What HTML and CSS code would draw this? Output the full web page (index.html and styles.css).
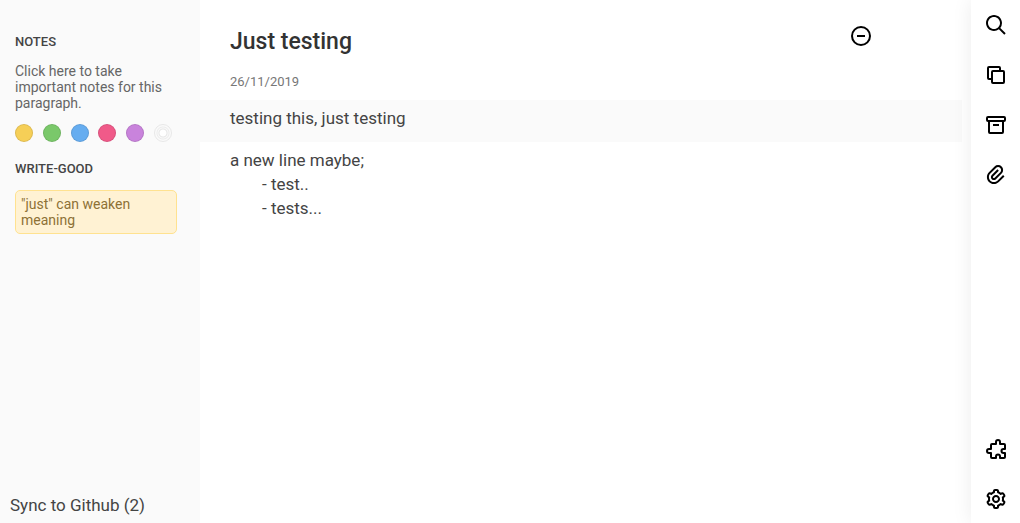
FILE: index.html
```html
<!DOCTYPE html>
<html lang="en">
<head>
<meta charset="utf-8">
<meta name="viewport" content="width=device-width, initial-scale=1">
<title>Just testing</title>
<link rel="stylesheet" href="styles.css">
</head>
<body>
<div class="app">
  <aside class="notes">
    <label class="notes-heading" for="note">NOTES</label>
    <textarea class="note-input" id="note" rows="3">Click here to take important notes for this paragraph.</textarea>
    <div class="swatches">
      <button class="swatch swatch-yellow" aria-label="Yellow"></button>
      <button class="swatch swatch-green" aria-label="Green"></button>
      <button class="swatch swatch-blue" aria-label="Blue"></button>
      <button class="swatch swatch-pink" aria-label="Pink"></button>
      <button class="swatch swatch-purple" aria-label="Purple"></button>
      <button class="swatch swatch-none" aria-label="No colour"></button>
    </div>
    <h2 class="notes-heading">WRITE-GOOD</h2>
    <p class="suggestion">"just" can weaken meaning</p>
    <button class="sync">Sync to Github (2)</button>
  </aside>

  <main class="editor">
    <header class="entry-header">
      <div>
        <h1 class="entry-title">Just testing</h1>
        <time class="entry-date" datetime="2019-11-26">26/11/2019</time>
      </div>
      <button class="icon-button" aria-label="Collapse">
        <svg class="icon" viewBox="0 0 24 24"><g class="line"><circle cx="12" cy="12" r="9"/><path d="M8 12h8"/></g></svg>
      </button>
    </header>
    <p class="paragraph paragraph-active">testing this, just testing</p>
    <div class="paragraph">a new line maybe;
      <div class="indented">- test..</div>
      <div class="indented">- tests...</div>
    </div>
  </main>

  <nav class="toolbar" aria-label="Tools">
    <button class="icon-button" aria-label="Search">
      <svg class="icon" viewBox="0 0 24 24"><path d="M10 18a7.952 7.952 0 0 0 4.897-1.688l5.396 5.396 1.414-1.414-5.396-5.396A7.952 7.952 0 0 0 18 10c0-4.411-3.589-8-8-8s-8 3.589-8 8 3.589 8 8 8zm0-14c3.309 0 6 2.691 6 6s-2.691 6-6 6-6-2.691-6-6 2.691-6 6-6z"/></svg>
    </button>
    <button class="icon-button" aria-label="Documents">
      <svg class="icon" viewBox="0 0 24 24"><g class="line"><path d="M8 16H5a1 1 0 0 1-1-1V5a1 1 0 0 1 1-1h10a1 1 0 0 1 1 1v3"/><rect x="8" y="8" width="12" height="12" rx="1"/></g></svg>
    </button>
    <button class="icon-button" aria-label="Archive">
      <svg class="icon" viewBox="0 0 24 24"><g class="line"><rect x="3" y="4" width="18" height="4" rx="1"/><path d="M5 8v11a1 1 0 0 0 1 1h12a1 1 0 0 0 1-1V8M9 12h6"/></g></svg>
    </button>
    <button class="icon-button" aria-label="Attachments">
      <svg class="icon" viewBox="0 0 24 24"><path transform="rotate(-45 12 12)" d="M17.004 5H9c-1.838 0-3.586.737-4.924 2.076C2.737 8.415 2 10.163 2 12c0 1.838.737 3.586 2.076 4.924C5.414 18.263 7.162 19 9 19h8v-2H9c-1.303 0-2.55-.529-3.51-1.49C4.529 14.55 4 13.303 4 12c0-1.302.529-2.549 1.49-3.51C6.45 7.529 7.697 7 9 7h8.004c.79 0 1.539.314 2.109.886.571.571.886 1.322.887 2.116a2.966 2.966 0 0 1-.884 2.11A2.988 2.988 0 0 1 17 13H9a.988.988 0 0 1-.698-.3A.991.991 0 0 1 8 12c0-.252.11-.507.301-.698A.987.987 0 0 1 9 11h8V9H9c-.79 0-1.541.315-2.114.889C6.314 10.461 6 11.211 6 12s.314 1.54.888 2.114A2.974 2.974 0 0 0 9 15h8.001a4.97 4.97 0 0 0 3.528-1.473 4.967 4.967 0 0 0-.001-7.055A4.95 4.95 0 0 0 17.004 5z"/></svg>
    </button>
    <button class="icon-button push-down" aria-label="Extensions">
      <svg class="icon" viewBox="0 0 24 24"><path class="line" d="M12 21v-1.500a2 2 0 0 1 4 0V21h4a1 1 0 0 0 1-1v-4h-1.500a2 2 0 0 1 0-4H21V8a1 1 0 0 0-1-1h-4V5a2 2 0 0 0-4 0v2H8a1 1 0 0 0-1 1v4H5a2 2 0 0 0 0 4h2v4a1 1 0 0 0 1 1z"/></svg>
    </button>
    <button class="icon-button" aria-label="Settings">
      <svg class="icon" viewBox="0 0 24 24"><path d="M12 16c2.206 0 4-1.794 4-4s-1.794-4-4-4-4 1.794-4 4 1.794 4 4 4zm0-6c1.084 0 2 .916 2 2s-.916 2-2 2-2-.916-2-2 .916-2 2-2z"/><path d="m2.845 16.136 1 1.730c.531.917 1.809 1.261 2.730.730l.529-.306A8.100 8.100 0 0 0 9 19.402V20c0 1.103.897 2 2 2h2c1.103 0 2-.897 2-2v-.598a8.132 8.132 0 0 0 1.896-1.111l.529.306c.923.53 2.198.188 2.731-.731l.999-1.729a2.001 2.001 0 0 0-.731-2.732l-.505-.292a7.718 7.718 0 0 0 0-2.224l.505-.292a2.002 2.002 0 0 0 .731-2.732l-.999-1.729c-.531-.92-1.808-1.265-2.731-.732l-.529.306A8.100 8.100 0 0 0 15 4.598V4c0-1.103-.897-2-2-2h-2c-1.103 0-2 .897-2 2v.598a8.132 8.132 0 0 0-1.896 1.111l-.529-.306c-.924-.531-2.200-.187-2.731.732l-.999 1.729a2.001 2.001 0 0 0 .731 2.732l.505.292a7.683 7.683 0 0 0 0 2.223l-.505.292a2.003 2.003 0 0 0-.731 2.733zm3.326-2.758A5.703 5.703 0 0 1 6 12c0-.462.058-.926.17-1.378a.999.999 0 0 0-.47-1.108l-1.123-.65.998-1.729 1.145.662a.997.997 0 0 0 1.188-.142 6.071 6.071 0 0 1 2.384-1.399A1 1 0 0 0 11 5.300V4h2v1.300a1 1 0 0 0 .708.956 6.083 6.083 0 0 1 2.384 1.399.999.999 0 0 0 1.188.142l1.144-.661 1 1.729-1.124.649a1 1 0 0 0-.47 1.108c.112.452.17.916.17 1.378 0 .461-.058.925-.171 1.378a1 1 0 0 0 .471 1.108l1.123.649-.998 1.729-1.145-.661a.996.996 0 0 0-1.188.142 6.071 6.071 0 0 1-2.384 1.399A1 1 0 0 0 13 18.700l.002 1.300H11v-1.300a1 1 0 0 0-.708-.956 6.083 6.083 0 0 1-2.384-1.399.992.992 0 0 0-1.188-.141l-1.144.662-1-1.729 1.124-.651a1 1 0 0 0 .471-1.108z"/></svg>
    </button>
  </nav>
</div>
</body>
</html>
```
FILE: styles.css
```css
* {
  box-sizing: border-box;
}

body {
  margin: 0;
  background: #fff;
  color: #444;
  font: 17px/24px Roboto, "Liberation Sans", sans-serif;
}

h1,
h2,
p {
  margin: 0;
}

button,
textarea {
  margin: 0;
  padding: 0;
  border: 0;
  background: none;
  color: inherit;
  font: inherit;
}

.app {
  display: flex;
  min-height: 100vh;
}

/* Left column */
.notes {
  display: flex;
  flex: 0 0 200px;
  flex-direction: column;
  padding: 34px 23px 6px 15px;
  background: #fafafa;
}

.notes-heading {
  color: #444;
  font-size: 13px;
  font-weight: 500;
  line-height: 16px;
}

.note-input {
  display: block;
  width: 100%;
  margin: 13px 0;
  overflow: hidden;
  resize: none;
  color: #666;
  font-size: 14px;
  line-height: 16px;
}

.swatches {
  display: flex;
  justify-content: space-between;
  margin-bottom: 19px;
  padding-right: 5px;
}

.swatch {
  flex: none;
  width: 18px;
  height: 18px;
  border: 1px solid rgba(0, 0, 0, 0.1);
  border-radius: 50%;
}

.swatch-yellow { background: #f6cf57; }
.swatch-green { background: #7ac86a; }
.swatch-blue { background: #66adf0; }
.swatch-pink { background: #f05a89; }
.swatch-purple { background: #c983dc; }

.swatch-none {
  border-color: #e8e8e8;
  background: radial-gradient(circle, #fff 3px, #e6e6e6 4px, #fafafa 5px, #ececec 6px, #fafafa 7px);
}

.suggestion {
  margin-top: 13px;
  padding: 5px;
  border: 1px solid #ffe290;
  border-radius: 5px;
  background: #fff2d3;
  color: #8d7136;
  font-size: 14px;
  line-height: 16px;
}

.sync {
  align-self: flex-start;
  margin-top: auto;
  margin-left: -5px;
}

/* Document */
.editor {
  flex: 1;
  min-width: 0;
  padding: 24px 9px 0 0;
}

.entry-header {
  display: flex;
  align-items: flex-start;
  justify-content: space-between;
  padding: 0 89px 6px 30px;
}

.entry-title {
  color: #333;
  font-size: 23px;
  font-weight: 500;
  line-height: 36px;
}

.entry-date {
  display: block;
  margin-top: 10px;
  color: #777;
  font-size: 13px;
}

.paragraph {
  padding: 6px 30px 12px;
}

.paragraph-active {
  background: #fafafa;
}

.indented {
  padding-left: 32px;
}

/* Right column */
.toolbar {
  display: flex;
  flex-direction: column;
  gap: 26px;
  padding: 13px 12px 12px 13px;
  background: #fff;
  box-shadow: 0 0 20px rgba(0, 0, 0, 0.08);
}

.push-down {
  margin-top: auto;
}

.icon-button {
  display: block;
  flex: none;
  width: 24px;
  height: 24px;
  color: #000;
  cursor: pointer;
}

.icon {
  display: block;
  width: 24px;
  height: 24px;
  fill: currentColor;
}

.line {
  fill: none;
  stroke: currentColor;
  stroke-width: 2;
  stroke-linejoin: round;
}
```
